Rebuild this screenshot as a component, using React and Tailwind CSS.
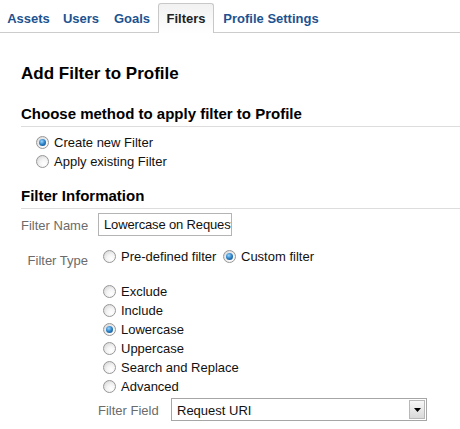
import React from "react";

function Radio({ checked }) {
  return (
    <span className="w-[13px] h-[13px] rounded-full border border-[#979797] bg-[radial-gradient(circle_at_65%_70%,#ffffff,#f4f4f4_40%,#cfcfcf)] flex items-center justify-center shrink-0">
      {checked && (
        <span className="w-[7px] h-[7px] rounded-full bg-[radial-gradient(circle_at_40%_35%,#9bd6ff,#2a7fc4_50%,#0b3f75)]" />
      )}
    </span>
  );
}

function RadioRow({ checked, label, className = "" }) {
  return (
    <div className={"flex items-center h-[19px] leading-[19px] " + className}>
      <Radio checked={checked} />
      <span className="ml-[5px] whitespace-nowrap">{label}</span>
    </div>
  );
}

const tabs = [
  { label: "Assets", w: "w-[55px]" },
  { label: "Users", w: "w-[50px]" },
  { label: "Goals", w: "w-[52px]" },
  { label: "Filters", w: "w-[56px]", active: true },
  { label: "Profile Settings", w: "w-[114px]" },
];

export default function App() {
  return (
    <div
      className="w-[460px] h-[429px] bg-white overflow-hidden text-[13px] text-[#111]"
      style={{ fontFamily: '"Liberation Sans", Arial, sans-serif' }}
    >
      {/* Tabs */}
      <div className="flex items-end h-[33px] border-b border-[#cccccc] pl-[1px]">
        {tabs.map((t) =>
          t.active ? (
            <div
              key={t.label}
              className={`${t.w} h-[30px] mb-[-1px] border border-b-0 border-[#c8c8c8] rounded-t-[3px] bg-linear-to-b from-[#f1f1f1] to-white text-center font-bold text-[#222] pt-[7px] leading-[16px]`}
            >
              {t.label}
            </div>
          ) : (
            <div
              key={t.label}
              className={`${t.w} h-[30px] mb-[-1px] border-t border-transparent text-center font-bold text-[#1d5390] pt-[7px] leading-[16px] whitespace-nowrap`}
            >
              {t.label}
            </div>
          )
        )}
      </div>

      <div className="pl-[21px]">
        <h1 className="mt-[31px] text-[17px] leading-[20px] font-bold text-black">
          Add Filter to Profile
        </h1>

        <h2 className="mt-[21px] text-[15px] leading-[18px] font-bold text-black pb-[3px] border-b border-[#dddddd]">
          Choose method to apply filter to Profile
        </h2>

        <div className="mt-[6px] pl-[15px]">
          <RadioRow checked label="Create new Filter" />
          <RadioRow label="Apply existing Filter" />
        </div>

        <h2 className="mt-[16px] text-[15px] leading-[18px] font-bold text-black pb-[3px] border-b border-[#dddddd]">
          Filter Information
        </h2>

        {/* Filter Name */}
        <div className="mt-[4px] flex items-start h-[23px]">
          <div className="w-[67px] text-right text-[#6b6b6b] leading-[25px] whitespace-nowrap">
            Filter Name
          </div>
          <input
            readOnly
            value="Lowercase on Request URI"
            className="ml-[10px] w-[134px] h-[23px] border border-[#b4b4b4] pl-[5px] pr-0 text-[13px] tracking-[-0.15px] text-[#111] outline-none bg-white"
          />
        </div>

        {/* Filter Type */}
        <div className="mt-[11px] flex items-start">
          <div className="w-[67px] text-right text-[#6b6b6b] leading-[19px] mt-[4px] whitespace-nowrap">
            Filter Type
          </div>
          <div className="ml-[10px] pl-[5px]">
            <div className="flex">
              <RadioRow label="Pre-defined filter" className="w-[120px]" />
              <RadioRow checked label="Custom filter" />
            </div>
            <div className="mt-[16px]">
              <RadioRow label="Exclude" />
              <RadioRow label="Include" />
              <RadioRow checked label="Lowercase" />
              <RadioRow label="Uppercase" />
              <RadioRow label="Search and Replace" />
              <RadioRow label="Advanced" />
            </div>
          </div>
        </div>

        {/* Filter Field */}
        <div className="mt-[2px] ml-[77px] flex items-start h-[23px]">
          <div className="w-[73px] text-[#6b6b6b] leading-[25px] whitespace-nowrap">
            Filter Field
          </div>
          <div className="w-[256px] h-[23px] border border-[#a6a6a6] flex items-start bg-white">
            <div className="flex-1 pl-[5px] leading-[23px] text-[#111] whitespace-nowrap">
              Request URI
            </div>
            <div className="w-[16px] h-[19px] m-[1px] border border-[#b8b8b8] bg-linear-to-b from-[#f7f7f7] to-[#d9d9d9] flex items-center justify-center">
              <svg width="7" height="4" viewBox="0 0 7 4">
                <path d="M0 0h7L3.5 4z" fill="#000" />
              </svg>
            </div>
          </div>
        </div>
      </div>
    </div>
  );
}
